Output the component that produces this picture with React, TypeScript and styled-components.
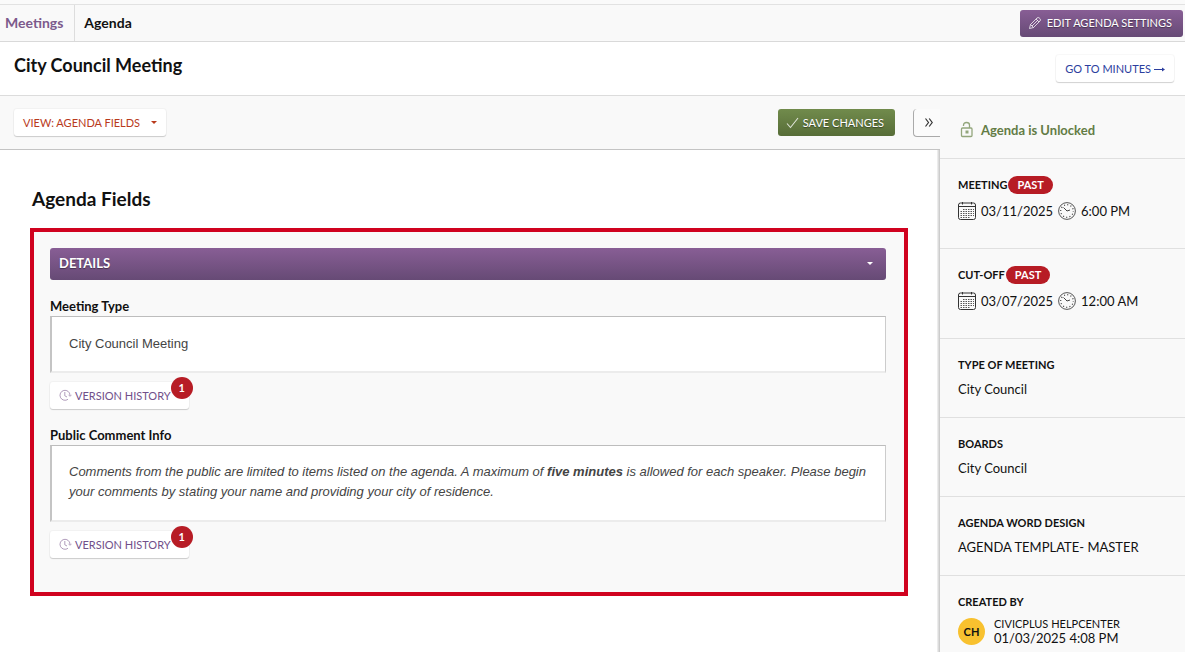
import React from "react";
import styled, { createGlobalStyle, css } from "styled-components";

const GlobalStyle = createGlobalStyle`
  *, *::before, *::after { box-sizing: border-box; }
  body {
    margin: 0;
    background: #fff;
    color: #111;
    font-family: Lato, "Liberation Sans", sans-serif;
    font-size: 13px;
    line-height: 20px;
  }
  h1, h2, h3, p, dl, dd { margin: 0; }
  button, input { font-family: inherit; }
  svg { display: block; flex: none; }
`;

const Page = styled.div`
  min-height: 100vh;
  display: flex;
  flex-direction: column;
`;

const TopStrip = styled.div`
  height: 5px;
  background: #fafafa;
  border-bottom: 1px solid #e2e2e2;
`;

const NavBar = styled.header`
  display: flex;
  align-items: center;
  justify-content: space-between;
  height: 37px;
  padding-right: 2px;
  background: #f9f9f9;
  border-bottom: 1px solid #d9d9d9;
`;

const Crumbs = styled.nav`
  display: flex;
  align-self: stretch;
  font-size: 14px;
  font-weight: 700;
`;

const CrumbLink = styled.a`
  display: flex;
  align-items: center;
  padding: 0 11px 0 5px;
  border-right: 1px solid #ddd;
  color: #7c5a8c;
  text-decoration: none;
`;

const CrumbCurrent = styled.span`
  display: flex;
  align-items: center;
  padding-left: 9px;
`;

const TitleBar = styled.div`
  display: flex;
  justify-content: space-between;
  align-items: flex-start;
  height: 54px;
  padding: 13px 11px 0 14px;
  border-bottom: 1px solid #dcdcdc;
`;

const Title = styled.h1`
  font-size: 18px;
  line-height: 20px;
  font-weight: 700;
`;

const SectionTitle = styled.h2`
  padding: 0 2px;
  font-size: 19px;
  line-height: 24px;
  font-weight: 700;
`;

type Tone = "purple" | "green";
const gradients: Record<Tone, string> = {
  purple: "linear-gradient(#885e95, #664a75)",
  green: "linear-gradient(#718b4c, #576d38)",
};

const buttonBase = css`
  display: inline-flex;
  align-items: center;
  height: 27px;
  border: 0;
  border-radius: 3px;
  font-size: 11px;
  line-height: 16px;
  white-space: nowrap;
  cursor: pointer;
`;

const SolidButton = styled.button<{ $tone: Tone }>`
  ${buttonBase}
  gap: 4px;
  padding: 0 11px 0 8px;
  background: ${(p) => gradients[p.$tone]};
  color: #fff;
  text-shadow: 0 1px 1px rgba(0, 0, 0, 0.4);
`;

const PlainButton = styled.button<{ $color: string }>`
  ${buttonBase}
  gap: 3px;
  padding: 0 9px;
  background: #fff;
  color: ${(p) => p.$color};
  box-shadow: 0 0 1px 1px rgba(0, 0, 0, 0.03), 0 1px 1px rgba(0, 0, 0, 0.16);
`;

const Spread = styled.span`
  display: inline-flex;
  align-items: center;
  gap: 11px;
`;

const Body = styled.div`
  display: flex;
  flex: 1;
`;

const Main = styled.main`
  flex: 1;
  min-width: 0;
`;

const Toolbar = styled.div`
  display: flex;
  justify-content: space-between;
  align-items: flex-start;
  height: 54px;
  padding: 13px 0 0 14px;
  background: #f9f9f9;
  border-bottom: 1px solid #c4c4c4;
`;

const ToolbarEnd = styled.div`
  display: flex;
  gap: 18px;
`;

const CollapseButton = styled.button`
  display: flex;
  align-items: center;
  justify-content: center;
  width: 27px;
  height: 28px;
  padding: 0 0 0 3px;
  border: solid #aaa;
  border-width: 0 0 1px 1px;
  border-radius: 4px 0 0 4px;
  background: #fbfbfb;
  color: #333;
  cursor: pointer;
`;

const Content = styled.div`
  display: flex;
  flex-direction: column;
  gap: 17px;
  padding: 37px 32px 56px 30px;
`;

const Fields = styled.section`
  display: flex;
  flex-direction: column;
  padding: 16px 18px 34px 16px;
  border: 4px solid #d0021f;
  background: #f9f9f9;
`;

const DetailsHeader = styled.button`
  display: flex;
  align-items: center;
  justify-content: space-between;
  height: 32px;
  margin-bottom: 16px;
  padding: 0 13px 2px 9px;
  border: 0;
  border-radius: 3px;
  background: ${gradients.purple};
  color: #fff;
  font-size: 13px;
  font-weight: 700;
  text-shadow: 0 1px 1px rgba(0, 0, 0, 0.4);
  cursor: pointer;
`;

const Field = styled.div`
  display: flex;
  flex-direction: column;
  margin-bottom: 16px;
  &:last-child { margin-bottom: 0; }
`;

const FieldLabel = styled.label`
  font-weight: 700;
`;

const boxStyle = css`
  width: 100%;
  margin-bottom: 9px;
  padding: 16px 17px 18px;
  border: solid;
  border-width: 1px 1px 2px 2px;
  border-color: #bdbdbd #ccc #ececec #c4c4c4;
  background: #fff;
  color: #444;
  font-family: "Liberation Sans", Arial, sans-serif;
  font-size: 13px;
  line-height: 20px;
`;

const TextBox = styled.input`
  ${boxStyle}
  height: 57px;
`;

const RichBox = styled.div`
  ${boxStyle}
  font-style: italic;
`;

const HistoryWrap = styled.div`
  position: relative;
  align-self: flex-start;
`;

const HistoryButton = styled(PlainButton)`
  padding-right: 18px;
`;

const CountBadge = styled.span`
  position: absolute;
  top: -5px;
  right: -4px;
  width: 22px;
  height: 22px;
  border-radius: 50%;
  background: #b71c25;
  color: #fff;
  font-size: 11px;
  font-weight: 700;
  line-height: 22px;
  text-align: center;
`;

const Sidebar = styled.aside`
  position: relative;
  width: 245px;
  background: #f9f9f9;
`;

const SidebarEdge = styled.div`
  position: absolute;
  top: 54px;
  bottom: 0;
  left: -3px;
  width: 3px;
  background: linear-gradient(to right, #f4f4f4, #c4c4c4);
`;

const LockStatus = styled.div`
  display: flex;
  align-items: center;
  gap: 7px;
  height: 63px;
  padding: 5px 0 0 20px;
  border-bottom: 1px solid #e0e0e0;
  color: #637c45;
  font-weight: 700;
`;

const Info = styled.section<{ $tall?: boolean }>`
  height: ${(p) => (p.$tall ? 90 : 79)}px;
  padding: 16px 0 0 18px;
  border-bottom: 1px solid #e0e0e0;
  &:last-child { border-bottom: 0; height: auto; }
`;

const InfoHead = styled.div`
  display: flex;
  align-items: center;
  gap: 1px;
  height: 20px;
`;

const InfoLabel = styled.h3`
  font-size: 11px;
  font-weight: 700;
`;

const PastTag = styled.span`
  height: 18px;
  padding: 0 9px;
  border-radius: 9px;
  background: #b71c25;
  color: #fff;
  font-size: 11px;
  font-weight: 700;
  line-height: 18px;
`;

const InfoValue = styled.p`
  margin-top: 4px;
  font-size: 13px;
`;

const When = styled.div`
  display: flex;
  align-items: center;
  gap: 5px;
  margin-top: 6px;
  font-size: 13px;
`;

const Author = styled.div`
  display: flex;
  align-items: center;
  gap: 9px;
  margin-top: 5px;
`;

const Avatar = styled.span`
  width: 27px;
  height: 27px;
  border-radius: 50%;
  background: #f8c12f;
  font-size: 11px;
  font-weight: 700;
  line-height: 27px;
  text-align: center;
`;

const AuthorText = styled.div`
  font-size: 13px;
  line-height: 14px;
`;

const AuthorName = styled.div`
  font-size: 11px;
`;

const Caret = () => (
  <svg width="6" height="3" viewBox="0 0 6 3" aria-hidden="true">
    <path d="M0 0h6L3 3z" fill="currentColor" />
  </svg>
);

const PencilIcon = () => (
  <svg width="15" height="14" viewBox="0 0 15 14" fill="none" stroke="#fff" strokeOpacity="0.75" strokeWidth="1" aria-hidden="true">
    <path d="M1.500 12.500l1-4L9 2q1.200-1 2.300 0l.7.700q1 1.100 0 2.300L5.500 11.500zM2.500 8.500l3 3M8 3l3 3M4 10l6-6" />
  </svg>
);

const CheckIcon = () => (
  <svg width="13" height="12" viewBox="0 0 13 12" fill="none" stroke="#fff" strokeOpacity="0.8" strokeWidth="1.1" aria-hidden="true">
    <path d="M1 6.500l3.500 4L12 1" />
  </svg>
);

const ArrowIcon = () => (
  <svg width="11" height="7" viewBox="0 0 11 7" aria-hidden="true">
    <path d="M0 4.500h9" stroke="currentColor" />
    <path d="M8 2.500L11 4.500 8 6.500z" fill="currentColor" />
  </svg>
);

const ChevronsIcon = () => (
  <svg width="8" height="9" viewBox="0 0 8 9" fill="none" stroke="currentColor" strokeWidth="1.2" aria-hidden="true">
    <path d="M.5.500l3 4-3 4M4.200.500l3 4-3 4" />
  </svg>
);

const HistoryIcon = () => (
  <svg width="13" height="13" viewBox="0 0 13 13" fill="none" stroke="#8b6d9b" strokeOpacity="0.75" strokeWidth="0.9" aria-hidden="true">
    <path d="M9 10.300A5 5 0 1 1 11 6.200M5.800 3v3.800L8 8M9.500 5.800L11 7.300 12.500 5.800" />
  </svg>
);

const LockIcon = () => (
  <svg width="14" height="17" viewBox="0 0 14 17" fill="none" stroke="#93a67c" strokeWidth="1.300" aria-hidden="true">
    <rect x="1.500" y="7" width="10.500" height="8.500" rx="1" />
    <path d="M3.500 5V4Q3.500 1.500 6.500 1.500T9.500 4v3" />
    <path d="M5.500 9.500h3v3h-3z" fill="#93a67c" stroke="none" />
  </svg>
);

const CalendarIcon = () => (
  <svg width="18" height="18" viewBox="0 0 18 18" fill="none" stroke="#333" aria-hidden="true">
    <rect x="0.500" y="1" width="17" height="16.500" rx="2" />
    <path d="M.5 4.500h17M4.500 0v2.500M13.500 0v2.500" />
    <path d="M5 7.500h11M2.500 9.500h13.500M2.500 11.500h13.500M2.500 13.500h13.500M2.500 15.500h9" strokeDasharray="1.500 1" stroke="#555" />
  </svg>
);

const ClockIcon = () => (
  <svg width="18" height="18" viewBox="0 0 18 18" fill="none" stroke="#444" aria-hidden="true">
    <circle cx="9" cy="9" r="8.400" strokeWidth="0.900" />
    <circle cx="9" cy="9" r="6.300" strokeWidth="1.300" strokeDasharray="1 2.300" strokeDashoffset="0.500" />
    <path d="M5.500 5.500L9 9l3-1" />
  </svg>
);

function VersionHistory() {
  return (
    <HistoryWrap>
      <HistoryButton type="button" $color="#71508a">
        <HistoryIcon />
        VERSION HISTORY
      </HistoryButton>
      <CountBadge>1</CountBadge>
    </HistoryWrap>
  );
}

function PastMoment({ label, date, time }: { label: string; date: string; time: string }) {
  return (
    <Info $tall>
      <InfoHead>
        <InfoLabel>{label}</InfoLabel>
        <PastTag>PAST</PastTag>
      </InfoHead>
      <When>
        <CalendarIcon />
        <span>{date}</span>
        <ClockIcon />
        <span>{time}</span>
      </When>
    </Info>
  );
}

function InfoItem({ label, value }: { label: string; value: string }) {
  return (
    <Info>
      <InfoHead>
        <InfoLabel>{label}</InfoLabel>
      </InfoHead>
      <InfoValue>{value}</InfoValue>
    </Info>
  );
}

export default function App() {
  return (
    <Page>
      <GlobalStyle />
      <TopStrip />
      <NavBar>
        <Crumbs aria-label="Breadcrumb">
          <CrumbLink href="#meetings">Meetings</CrumbLink>
          <CrumbCurrent aria-current="page">Agenda</CrumbCurrent>
        </Crumbs>
        <SolidButton type="button" $tone="purple">
          <PencilIcon />
          EDIT AGENDA SETTINGS
        </SolidButton>
      </NavBar>
      <TitleBar>
        <Title>City Council Meeting</Title>
        <PlainButton type="button" $color="#2c3e9e">
          GO TO MINUTES
          <ArrowIcon />
        </PlainButton>
      </TitleBar>
      <Body>
        <Main>
          <Toolbar>
            <PlainButton type="button" $color="#b93a1c" aria-haspopup="menu">
              <Spread>
                VIEW: AGENDA FIELDS
                <Caret />
              </Spread>
            </PlainButton>
            <ToolbarEnd>
              <SolidButton type="button" $tone="green">
                <CheckIcon />
                SAVE CHANGES
              </SolidButton>
              <CollapseButton type="button" aria-label="Collapse panel">
                <ChevronsIcon />
              </CollapseButton>
            </ToolbarEnd>
          </Toolbar>
          <Content>
            <SectionTitle>Agenda Fields</SectionTitle>
            <Fields>
              <DetailsHeader type="button" aria-expanded="true">
                DETAILS
                <Caret />
              </DetailsHeader>
              <Field>
                <FieldLabel htmlFor="meeting-type">Meeting Type</FieldLabel>
                <TextBox id="meeting-type" type="text" defaultValue="City Council Meeting" />
                <VersionHistory />
              </Field>
              <Field>
                <FieldLabel as="span" id="comment-label">Public Comment Info</FieldLabel>
                <RichBox role="textbox" aria-multiline="true" aria-labelledby="comment-label" contentEditable suppressContentEditableWarning>
                  Comments from the public are limited to items listed on the agenda. A maximum of <strong>five minutes</strong> is
                  allowed for each speaker. Please begin your comments by stating your name and providing your city of residence.
                </RichBox>
                <VersionHistory />
              </Field>
            </Fields>
          </Content>
        </Main>
        <Sidebar>
          <SidebarEdge />
          <LockStatus>
            <LockIcon />
            Agenda is Unlocked
          </LockStatus>
          <PastMoment label="MEETING" date="03/11/2025" time="6:00 PM" />
          <PastMoment label="CUT-OFF" date="03/07/2025" time="12:00 AM" />
          <InfoItem label="TYPE OF MEETING" value="City Council" />
          <InfoItem label="BOARDS" value="City Council" />
          <InfoItem label="AGENDA WORD DESIGN" value="AGENDA TEMPLATE- MASTER" />
          <Info>
            <InfoHead>
              <InfoLabel>CREATED BY</InfoLabel>
            </InfoHead>
            <Author>
              <Avatar>CH</Avatar>
              <AuthorText>
                <AuthorName>CIVICPLUS HELPCENTER</AuthorName>
                01/03/2025 4:08 PM
              </AuthorText>
            </Author>
          </Info>
        </Sidebar>
      </Body>
    </Page>
  );
}
